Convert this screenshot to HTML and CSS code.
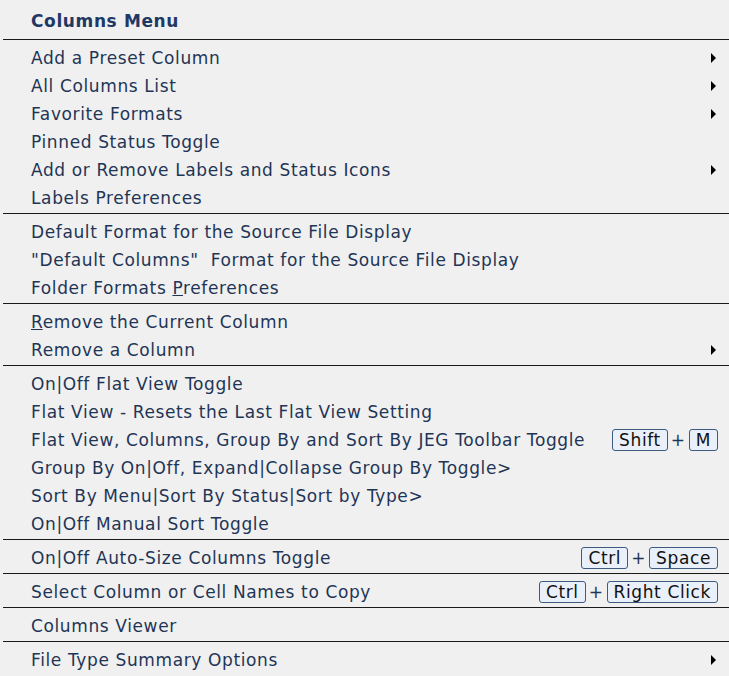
FILE: index.html
```html
<!DOCTYPE html>
<html>
<head>
<meta charset="utf-8">
<link rel="stylesheet" href="styles.css">
</head>
<body>
<div class="menu">
  <div class="title">Columns Menu</div>
  <div class="section">
    <div class="item"><span>Add a Preset Column</span><span class="arrow"></span></div>
    <div class="item"><span>All Columns List</span><span class="arrow"></span></div>
    <div class="item"><span>Favorite Formats</span><span class="arrow"></span></div>
    <div class="item"><span>Pinned Status Toggle</span></div>
    <div class="item"><span>Add or Remove Labels and Status Icons</span><span class="arrow"></span></div>
    <div class="item"><span>Labels Preferences</span></div>
  </div>
  <div class="section">
    <div class="item"><span>Default Format for the Source File Display</span></div>
    <div class="item"><span class="pre">"Default Columns"  Format for the Source File Display</span></div>
    <div class="item"><span>Folder Formats <u>P</u>references</span></div>
  </div>
  <div class="section">
    <div class="item"><span><u>R</u>emove the Current Column</span></div>
    <div class="item"><span>Remove a Column</span><span class="arrow"></span></div>
  </div>
  <div class="section">
    <div class="item"><span>On|Off Flat View Toggle</span></div>
    <div class="item"><span>Flat View - Resets the Last Flat View Setting</span></div>
    <div class="item"><span>Flat View, Columns, Group By and Sort By JEG Toolbar Toggle</span><span class="keys"><kbd>Shift</kbd><span class="plus">+</span><kbd>M</kbd></span></div>
    <div class="item"><span>Group By On|Off, Expand|Collapse Group By Toggle&gt;</span></div>
    <div class="item"><span>Sort By Menu|Sort By Status|Sort by Type&gt;</span></div>
    <div class="item"><span>On|Off Manual Sort Toggle</span></div>
  </div>
  <div class="section">
    <div class="item"><span>On|Off Auto-Size Columns Toggle</span><span class="keys"><kbd>Ctrl</kbd><span class="plus">+</span><kbd>Space</kbd></span></div>
  </div>
  <div class="section">
    <div class="item"><span>Select Column or Cell Names to Copy</span><span class="keys"><kbd>Ctrl</kbd><span class="plus">+</span><kbd>Right Click</kbd></span></div>
  </div>
  <div class="section">
    <div class="item"><span>Columns Viewer</span></div>
  </div>
  <div class="section">
    <div class="item"><span>File Type Summary Options</span><span class="arrow"></span></div>
  </div>
</div>
</body>
</html>
```
FILE: styles.css
```css
html, body {
  margin: 0;
  padding: 0;
  background: #f0f0f0;
}
body {
  font-family: "DejaVu Sans", Verdana, sans-serif;
  font-size: 17px;
  letter-spacing: 0.62px;
  color: #1f3556;
}
.menu {
  width: 729px;
  height: 676px;
  overflow: hidden;
}
.title {
  height: 39px;
  line-height: 42px;
  padding-left: 31px;
  font-weight: bold;
  color: #1f3864;
}
.section {
  margin-left: 3px;
  border-top: 1px solid #1a1a1a;
  padding: 3px 0 2px 0;
}
.item {
  box-sizing: border-box;
  height: 28px;
  padding-top: 2px;
  display: flex;
  align-items: center;
  justify-content: space-between;
  padding-left: 28px;
  padding-right: 11px;
}
.pre {
  white-space: pre;
}
.arrow {
  width: 0;
  height: 0;
  border-top: 5px solid transparent;
  border-bottom: 5px solid transparent;
  border-left: 5px solid #000;
  margin-right: 2px;
}
.keys {
  display: flex;
  align-items: center;
}
kbd {
  font-family: inherit;
  font-size: 17px;
  color: #111;
  background: #e9f0f9;
  border: 1px solid #3d5a80;
  border-radius: 3px;
  padding: 0 6px;
  line-height: 20px;
}
.plus {
  margin: 0 3px;
  color: #1f3556;
}
```
